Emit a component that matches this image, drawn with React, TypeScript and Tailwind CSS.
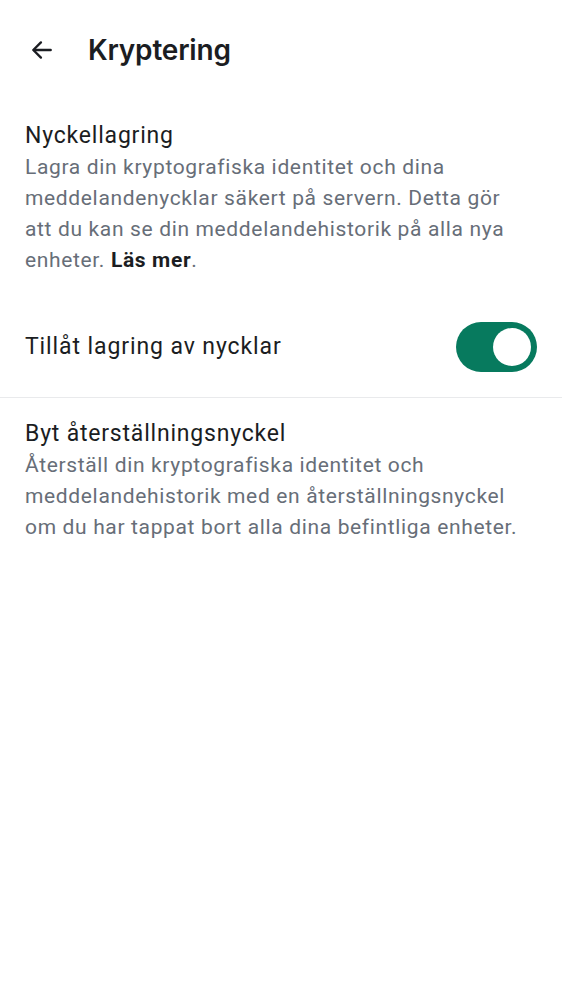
import React from 'react'

const App = () => {
  return (
    <div className="min-h-[1000px] w-full bg-white text-[#1b1d22] font-['Roboto',sans-serif]">
      {/* Header */}
      <div className="flex h-[100px] items-center pl-[29px]">
        <svg width="26" height="26" viewBox="0 0 24 24" fill="none" stroke="#1b1d22" strokeWidth="2.2" strokeLinecap="round" strokeLinejoin="round">
          <path d="M20 12H4.5" />
          <path d="M11 5l-7 7 7 7" />
        </svg>
        <h1 className="ml-[33px] font-['Inter',sans-serif] text-[28px] font-semibold tracking-[-0.2px]">Kryptering</h1>
      </div>

      {/* Key storage */}
      <div className="px-[25px] pt-[21px]">
        <h2 className="text-[23px] leading-[30px] tracking-[0.8px]">Nyckellagring</h2>
        <p className="mt-[1px] max-w-[500px] text-[21px] leading-[31px] tracking-[0.65px] text-[#676e78]">
          Lagra din kryptografiska identitet och dina meddelandenycklar säkert på servern. Detta gör att du kan se din meddelandehistorik på alla nya enheter.{' '}
          <b className="font-bold text-[#1b1d22]">Läs mer</b>.
        </p>

        <div className="flex items-center justify-between pt-[46px] pb-[25px]">
          <span className="text-[23px] leading-[30px] tracking-[0.9px]">Tillåt lagring av nycklar</span>
          <div className="flex h-[50px] w-[81px] items-center justify-end rounded-full bg-[#077a5e] pr-[6px]">
            <div className="h-[38px] w-[38px] rounded-full bg-white" />
          </div>
        </div>
      </div>

      <div className="h-px bg-[#e9eaec]" />

      {/* Reset key */}
      <div className="px-[25px] pt-[21px]">
        <h2 className="text-[23px] leading-[30px] tracking-[0.8px]">Byt återställningsnyckel</h2>
        <p className="mt-[1px] max-w-[500px] text-[21px] leading-[31px] tracking-[0.65px] text-[#676e78]">
          Återställ din kryptografiska identitet och meddelandehistorik med en återställningsnyckel om du har tappat bort alla dina befintliga enheter.
        </p>
      </div>
    </div>
  )
}

export default App
